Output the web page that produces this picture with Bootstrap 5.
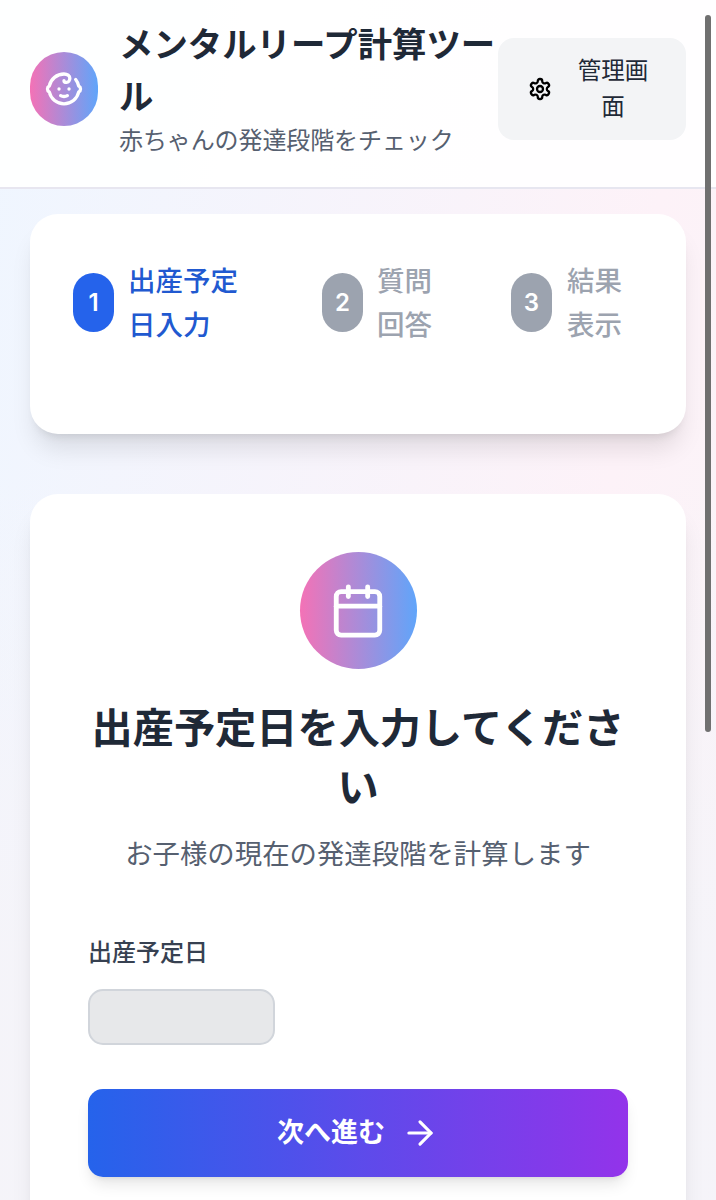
<!DOCTYPE html>
<html lang="ja">
<head>
    <meta charset="UTF-8">
    <meta name="viewport" content="width=device-width, initial-scale=1.0">
    <title>メンタルリープ計算ツール</title>
    <link rel="stylesheet" href="https://cdn.jsdelivr.net/npm/bootstrap@5.3.0/dist/css/bootstrap.min.css">
    <style>
        html, body { height: 1200px; overflow: hidden; }
        body {
            font-family: Inter, "Noto Sans CJK JP", sans-serif;
            color: #1f2937;
            background:
                linear-gradient(180deg, rgba(245, 244, 248, 0) 480px, rgba(245, 244, 249, .95) 950px),
                linear-gradient(100deg, #eff6ff 0%, #fdf2f8 75%, #f9f4f8 100%);
        }
        .app-head {
            height: 189px;
            padding: 0 30px 10px;
            background: rgba(255, 255, 255, .92);
            border-bottom: 2px solid #e7e6f0;
        }
        .app-logo { flex: 0 0 68px; height: 74px; margin-right: 21px; }
        .grad-pb { background: linear-gradient(90deg, #f472b6, #60a5fa); }
        .app-title { font-size: 34.4px; line-height: 52px; font-weight: 700; margin: 0; color: #1f2937; }
        .app-sub { font-size: 24px; line-height: 36px; color: #566070; margin: 0; letter-spacing: -.1px; }
        .admin-btn {
            flex: 0 0 188px;
            height: 102px;
            background: #f3f4f6;
            border: 0;
            border-radius: 16px;
            padding: 0 28px 0 30px;
            font-size: 23.5px;
            line-height: 36px;
            color: #1f2937;
        }
        .admin-btn span { flex: 1; text-align: center; }
        .admin-btn svg { margin-right: 16px; flex: 0 0 24px; }
        .page-main { padding: 25px 30px 0; }
        .panel {
            background: #fff;
            border-radius: 28px;
            box-shadow: 0 20px 25px -5px rgba(0, 0, 0, .1), 0 8px 10px -6px rgba(0, 0, 0, .1);
        }
        .step-panel { height: 220px; padding: 45px 43px 0; margin-bottom: 60px; }
        .step-row { height: 88px; }
        .step-one { flex: 0 0 249px; }
        .step-two { flex: 0 0 189px; }
        .step-num {
            flex: 0 0 41px;
            height: 59px;
            margin-right: 15px;
            margin-top: -1px;
            color: #fff;
            font-size: 24px;
            font-weight: 600;
            background: #9ca3af;
        }
        .step-text { font-size: 27.5px; line-height: 44px; color: #9ca3af; font-weight: 500; margin-left: -1px; }
        .step-one .step-num { background: #2563eb; }
        .step-one .step-text { color: #2159d0; max-width: 4.5em; }
        .step-two .step-text, .step-last .step-text { max-width: 2.5em; }
        .step-last .step-text { margin-left: 0; }
        .form-panel { padding: 58px 58px 60px; height: 800px; }
        .form-icon { width: 117px; height: 117px; margin: 0 auto 30px; }
        .form-title { font-size: 41.2px; line-height: 59px; font-weight: 700; color: #1f2937; margin: 0 0 17px; }
        .form-sub { font-size: 27.4px; line-height: 40px; color: #566070; margin: 0 0 61px; }
        .date-label { font-size: 24px; line-height: 36px; font-weight: 500; color: #374151; margin-bottom: 18px; display: block; }
        .date-box {
            display: block;
            width: 187px;
            height: 56px;
            background: #e7e8ea;
            border: 2px solid #d1d5db;
            border-radius: 15px;
            margin-bottom: 44px;
        }
        .next-btn {
            height: 88px;
            border: 0;
            border-radius: 15px;
            background: linear-gradient(90deg, #2563eb, #9333ea);
            color: #fff;
            font-size: 27px;
            font-weight: 700;
            box-shadow: 0 10px 15px -3px rgba(0, 0, 0, .1), 0 4px 6px -4px rgba(0, 0, 0, .1);
        }
        .next-btn svg { margin-left: 16px; }
        .fake-scroll {
            position: fixed;
            top: 15px;
            right: 5px;
            width: 6px;
            height: 717px;
            border-radius: 3px;
            background: #707070;
        }
    </style>
</head>
<body>
    <header class="app-head d-flex align-items-center">
        <div class="app-logo grad-pb rounded-pill d-flex align-items-center justify-content-center">
            <svg width="40" height="40" viewBox="0 0 24 24" fill="none" stroke="#fff" stroke-width="2" stroke-linecap="round" stroke-linejoin="round">
                <path d="M9 12h.01"/><path d="M15 12h.01"/>
                <path d="M10 16c.5.3 1.2.5 2 .5s1.5-.2 2-.5"/>
                <path d="M19 6.3a9 9 0 0 1 1.8 3.9 2 2 0 0 1 0 3.6 9 9 0 0 1-17.6 0 2 2 0 0 1 0-3.6A9 9 0 0 1 12 3c2 0 3.5 1.1 3.5 2.5s-.9 2.5-2 2.5c-.8 0-1.5-.4-1.5-1"/>
            </svg>
        </div>
        <div class="flex-grow-1" style="min-width: 0">
            <h1 class="app-title">メンタルリープ計算ツール</h1>
            <p class="app-sub">赤ちゃんの発達段階をチェック</p>
        </div>
        <button class="admin-btn d-flex align-items-center" type="button">
            <svg width="24" height="24" viewBox="0 0 24 24" fill="none" stroke="#000" stroke-width="2.3" stroke-linecap="round" stroke-linejoin="round">
                <path d="M12.22 2h-.44a2 2 0 0 0-2 2v.18a2 2 0 0 1-1 1.73l-.43.25a2 2 0 0 1-2 0l-.15-.08a2 2 0 0 0-2.73.73l-.22.38a2 2 0 0 0 .73 2.73l.15.1a2 2 0 0 1 1 1.72v.51a2 2 0 0 1-1 1.74l-.15.09a2 2 0 0 0-.73 2.73l.22.38a2 2 0 0 0 2.73.73l.15-.08a2 2 0 0 1 2 0l.43.25a2 2 0 0 1 1 1.73V20a2 2 0 0 0 2 2h.44a2 2 0 0 0 2-2v-.18a2 2 0 0 1 1-1.73l.43-.25a2 2 0 0 1 2 0l.15.08a2 2 0 0 0 2.73-.73l.22-.39a2 2 0 0 0-.73-2.73l-.15-.08a2 2 0 0 1-1-1.74v-.5a2 2 0 0 1 1-1.74l.15-.09a2 2 0 0 0 .73-2.73l-.22-.38a2 2 0 0 0-2.73-.73l-.15.08a2 2 0 0 1-2 0l-.43-.25a2 2 0 0 1-1-1.73V4a2 2 0 0 0-2-2z"/>
                <circle cx="12" cy="12" r="3"/>
            </svg>
            <span>管理画面</span>
        </button>
    </header>

    <main class="page-main">
        <section class="panel step-panel">
            <div class="step-row d-flex align-items-center">
                <div class="step-one d-flex align-items-center">
                    <div class="step-num rounded-pill d-flex align-items-center justify-content-center">1</div>
                    <div class="step-text">出産予定日入力</div>
                </div>
                <div class="step-two d-flex align-items-center">
                    <div class="step-num rounded-pill d-flex align-items-center justify-content-center">2</div>
                    <div class="step-text">質問回答</div>
                </div>
                <div class="step-last d-flex align-items-center">
                    <div class="step-num rounded-pill d-flex align-items-center justify-content-center">3</div>
                    <div class="step-text">結果表示</div>
                </div>
            </div>
        </section>

        <section class="panel form-panel">
            <div class="form-icon grad-pb rounded-circle d-flex align-items-center justify-content-center">
                <svg width="58" height="58" viewBox="0 0 24 24" fill="none" stroke="#fff" stroke-width="2" stroke-linecap="round" stroke-linejoin="round">
                    <path d="M8 2v4"/><path d="M16 2v4"/>
                    <rect x="3" y="4" width="18" height="18" rx="2"/>
                    <path d="M3 10h18"/>
                </svg>
            </div>
            <h2 class="form-title text-center">出産予定日を入力してください</h2>
            <p class="form-sub text-center">お子様の現在の発達段階を計算します</p>
            <label class="date-label" for="dueDate">出産予定日</label>
            <input class="date-box" id="dueDate" type="text" disabled>
            <button class="next-btn w-100 d-flex align-items-center justify-content-center" type="button">
                次へ進む
                <svg width="38" height="38" viewBox="0 0 24 24" fill="none" stroke="#fff" stroke-width="2" stroke-linecap="round" stroke-linejoin="round">
                    <path d="M5 12h14"/><path d="m12 5 7 7-7 7"/>
                </svg>
            </button>
        </section>
    </main>
    <div class="fake-scroll"></div>
    <script src="https://cdn.jsdelivr.net/npm/bootstrap@5.3.0/dist/js/bootstrap.bundle.min.js"></script>
</body>
</html>
